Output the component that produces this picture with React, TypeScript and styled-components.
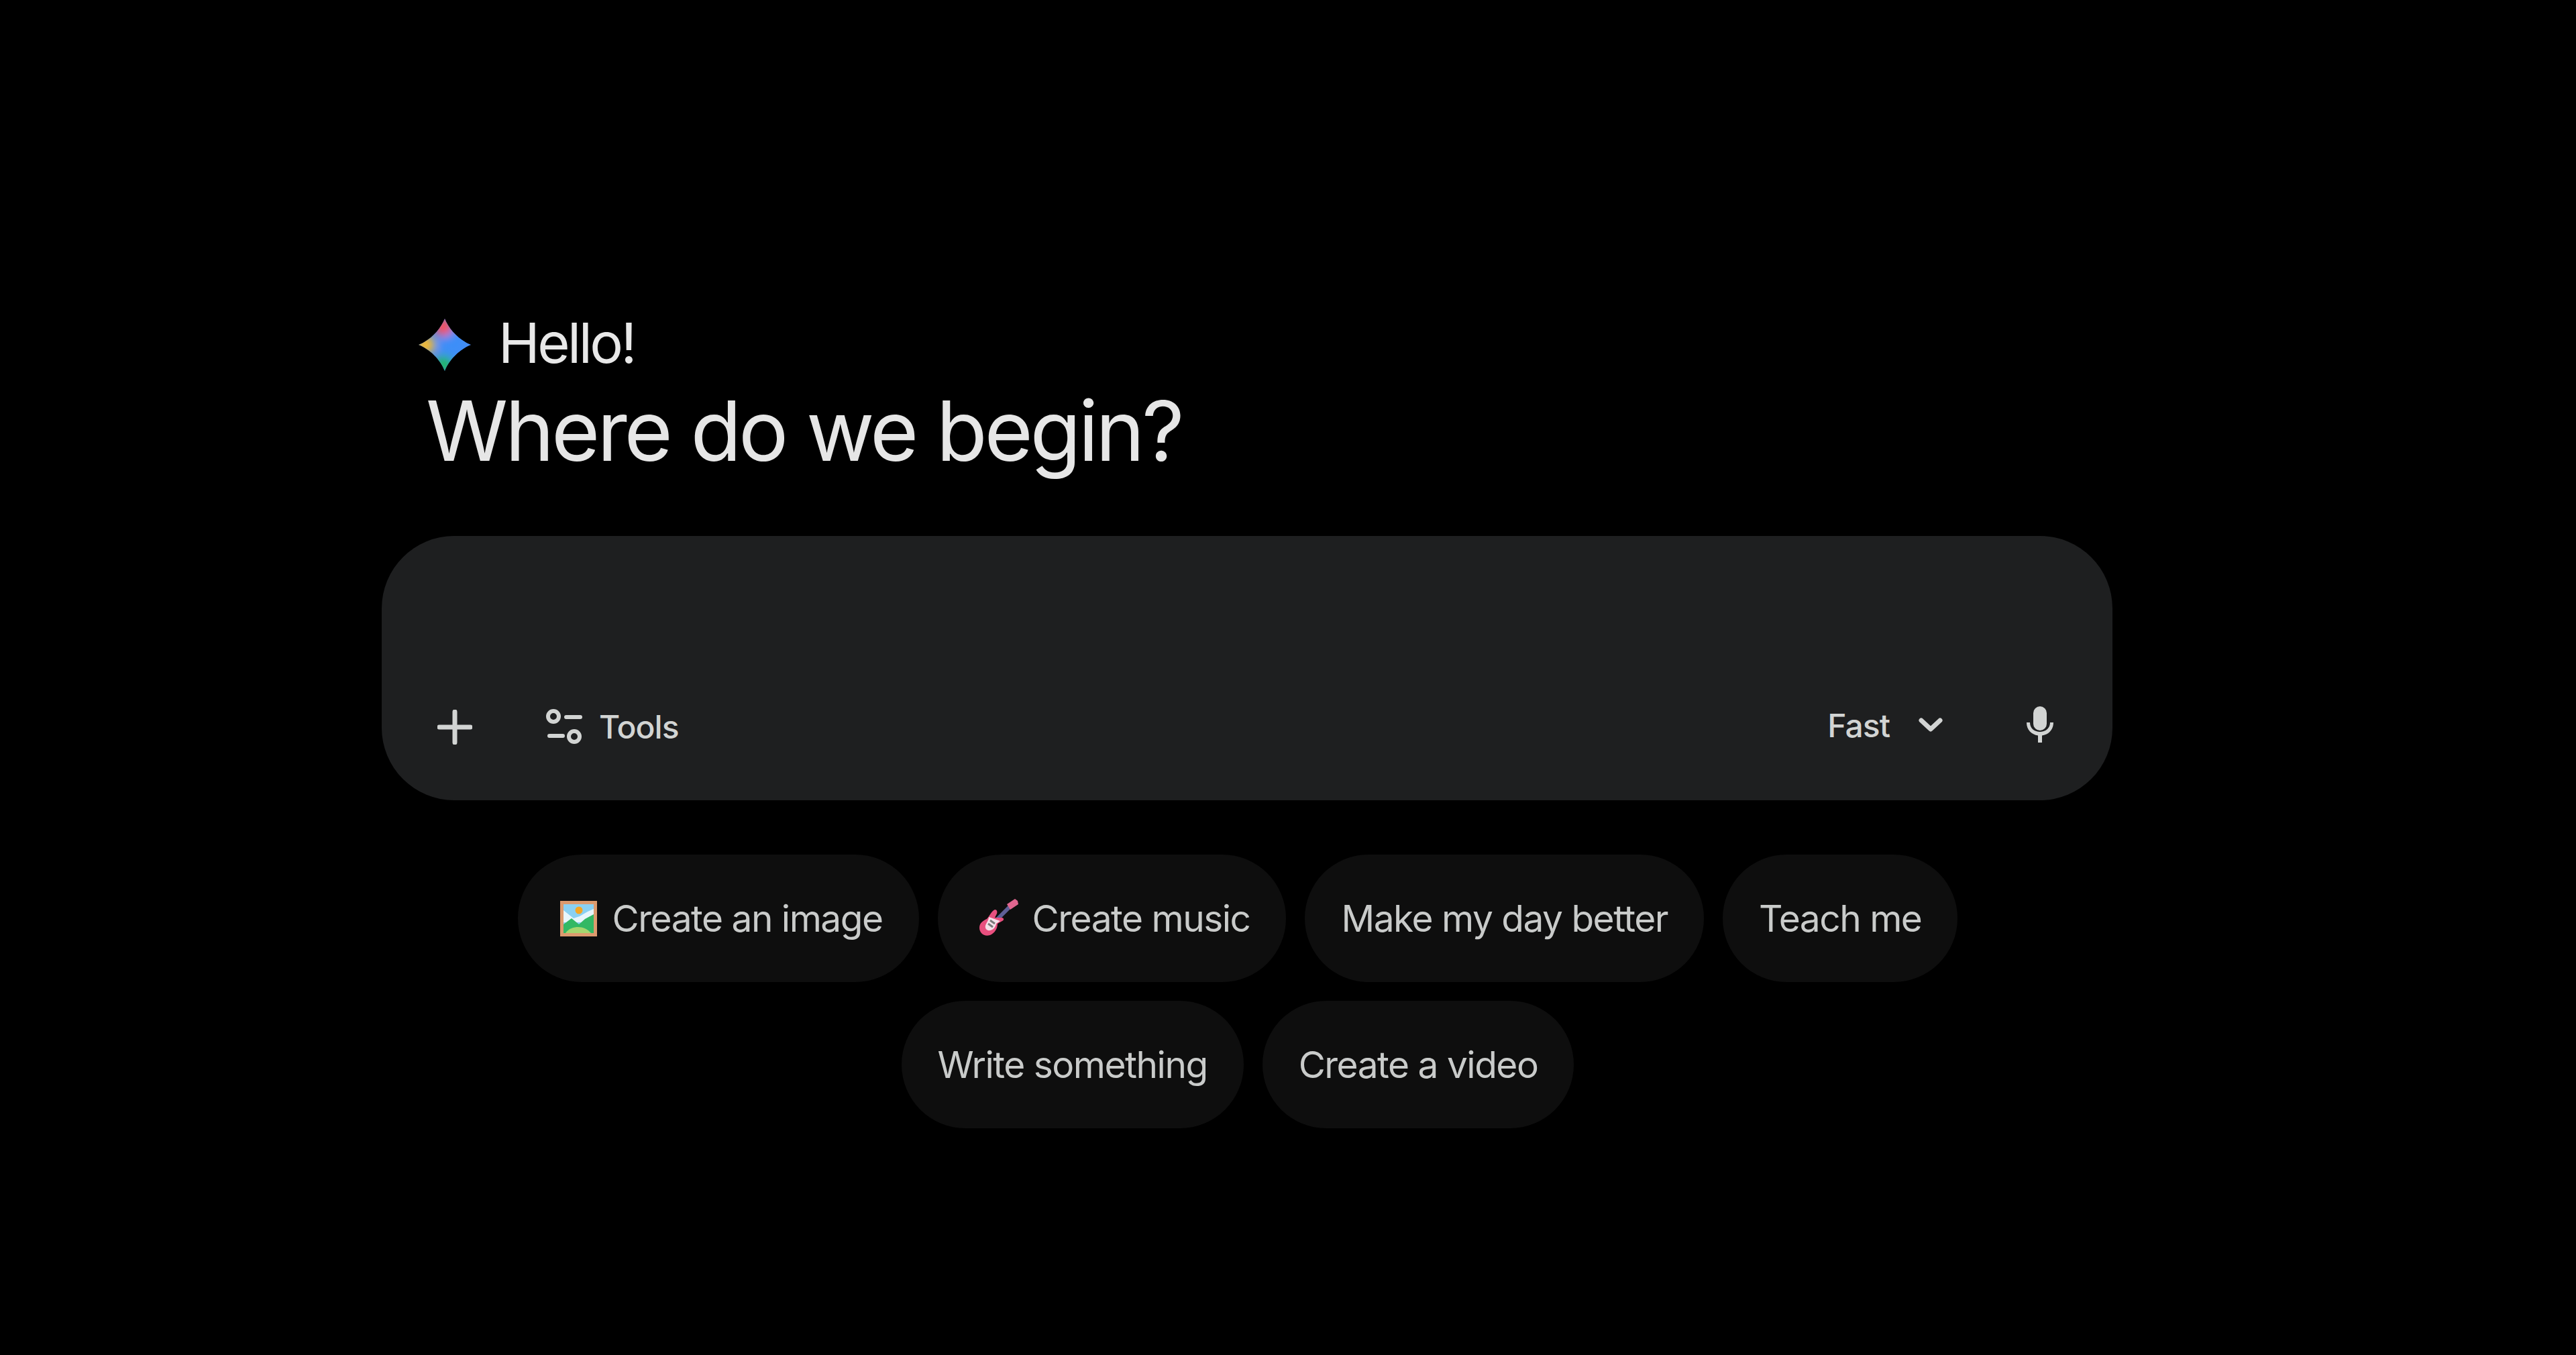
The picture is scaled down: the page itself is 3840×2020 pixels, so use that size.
import React from "react";
import styled, { createGlobalStyle } from "styled-components";

const Global = createGlobalStyle`
  html, body { margin: 0; padding: 0; background: #000; }
  * { box-sizing: border-box; }
`;

const Page = styled.main`
  min-height: 2020px;
  width: 3840px;
  background: #000;
  padding: 459px 0 0 569px;
  font-family: Inter, "Liberation Sans", sans-serif;
`;

const Column = styled.div`
  width: 2580px;
  display: flex;
  flex-direction: column;
`;

const Greeting = styled.div`
  display: flex;
  align-items: center;
  gap: 41px;
  padding-left: 55px;
  height: 105px;
`;

const StarMark = styled.svg`
  width: 78px;
  height: 78px;
  margin-top: 5px;
`;

const Hello = styled.span`
  font-size: 83px;
  line-height: 105px;
  letter-spacing: -3.5px;
  color: #e8e8e8;
`;

const Heading = styled.h1`
  margin: 0 0 78px 0;
  padding-left: 66px;
  font-size: 124px;
  line-height: 157px;
  font-weight: 400;
  letter-spacing: -4.2px;
  color: #e6e6e6;
`;

const Composer = styled.section`
  height: 394px;
  border-radius: 108px;
  background: #1e1f20;
  display: flex;
  align-items: flex-end;
  justify-content: space-between;
  padding: 0 86px 81px 83px;
`;

const ToolGroup = styled.div<{ $raised?: boolean }>`
  display: flex;
  align-items: center;
  margin-bottom: ${(p) => (p.$raised ? "1px" : "0")};
`;

const Label = styled.span`
  font-size: 48px;
  line-height: 56px;
  letter-spacing: -1px;
  font-weight: 500;
  color: #d2d4d3;
`;

const Plus = styled.svg`
  width: 52px;
  height: 52px;
  margin-right: 109px;
`;

const ToolsIcon = styled.svg`
  width: 58px;
  height: 56px;
  margin-right: 22px;
`;

const Chevron = styled.svg`
  width: 38px;
  height: 24px;
  margin: 0 0 2px 42px;
`;

const Mic = styled.svg`
  width: 44px;
  height: 56px;
  margin: 0 0 2px 122px;
`;

const Chips = styled.div`
  display: flex;
  flex-wrap: wrap;
  justify-content: center;
  margin-top: 81px;
`;

const Chip = styled.button<{ $emoji?: boolean }>`
  height: 190px;
  margin: 0 28px 28px 0;
  padding: 0 54px 0 ${(p) => (p.$emoji ? "61px" : "54px")};
  border: 0;
  border-radius: 95px;
  background: #0e0e0e;
  color: #c9cbca;
  font-family: inherit;
  font-size: 55px;
  letter-spacing: -1.5px;
  display: flex;
  align-items: center;
  gap: 21px;
`;

const Emoji = styled.svg`
  width: 59px;
  height: 59px;
`;

const Break = styled.div`
  flex-basis: 100%;
  height: 0;
`;

const Star = () => (
  <StarMark viewBox="0 0 76 76">
    <defs>
      <clipPath id="star">
        <path d="M38 0C44 16 60 32 76 38C60 44 44 60 38 76C32 60 16 44 0 38C16 32 32 16 38 0Z" />
      </clipPath>
      <filter id="soft" x="-50%" y="-50%" width="200%" height="200%">
        <feGaussianBlur stdDeviation="6" />
      </filter>
    </defs>
    <g clipPath="url(#star)">
      <rect width="76" height="76" fill="#4a8df0" />
      <g filter="url(#soft)">
        <circle cx="52" cy="38" r="20" fill="#3d8ef8" />
        <circle cx="36" cy="12" r="13" fill="#f8505c" />
        <circle cx="10" cy="38" r="13" fill="#fbbc2c" />
        <circle cx="37" cy="66" r="12" fill="#1fb85e" />
      </g>
    </g>
  </StarMark>
);

const ImageEmoji = () => (
  <Emoji viewBox="0 0 59 59">
    <rect x="2" y="3" width="55" height="53" fill="#dc9a6e" />
    <rect x="7" y="8" width="45" height="43" fill="#8ad0f2" />
    <path d="M7 17l15 12 9-3 12-7 9-4v20H7z" fill="#e8f5fb" />
    <circle cx="30" cy="17" r="5.500" fill="#f5a623" />
    <path d="M7 38l12-9 11 9 9-8 13-7v28H7z" fill="#33b864" />
    <path d="M10 51c5-7 12-9 19-9s14 3 19 9z" fill="#a5d66f" />
  </Emoji>
);

const GuitarEmoji = () => (
  <Emoji viewBox="0 0 59 59">
    <path d="M24 34L50 8" stroke="#5f5f96" strokeWidth="6" />
    <path d="M42 8l12-8 4 3 1 5-12 8z" fill="#e0668f" />
    <path d="M24 16c3 0 4 3 3 6l-3 6 10 0c4 0 4 4 1 5l-7 4c0 7-4 14-11 17-9 3-16-3-16-11 0-7 6-11 11-13 4-4 7-12 12-14z" fill="#e84f7e" />
    <path d="M15 27l17 6-6 4c-1 5-4 9-9 10-5 1-8-3-7-7 1-4 5-8 5-13z" fill="#f6e0e9" />
    <path d="M17 32l7 5M14 37l7 5" stroke="#7a7a7a" strokeWidth="3" />
  </Emoji>
);

export default function App() {
  return (
    <Page>
      <Global />
      <Column>
        <Greeting>
          <Star />
          <Hello>Hello!</Hello>
        </Greeting>
        <Heading>Where do we begin?</Heading>
        <Composer>
          <ToolGroup>
            <Plus viewBox="0 0 52 52" fill="none" stroke="#d2d4d3" strokeWidth="7" strokeLinecap="round">
              <path d="M26 3V49M3 26H49" />
            </Plus>
            <ToolsIcon viewBox="0 0 58 56" fill="none" stroke="#d2d4d3" strokeWidth="6" strokeLinecap="round">
              <circle cx="12" cy="12" r="8" />
              <circle cx="43" cy="42" r="8" />
              <path d="M31 13H52M6 41H26" />
            </ToolsIcon>
            <Label>Tools</Label>
          </ToolGroup>
          <ToolGroup $raised>
            <Label>Fast</Label>
            <Chevron viewBox="0 0 38 24" fill="none" stroke="#d2d4d3" strokeWidth="7" strokeLinecap="round" strokeLinejoin="round">
              <path d="M5 5L19 18L33 5" />
            </Chevron>
            <Mic viewBox="0 0 44 56" fill="#d2d4d3">
              <rect x="12" y="0" width="20" height="36" rx="10" />
              <path d="M2 24h5c0 9 7 14 15 14s15-5 15-14h5c0 11-7 18-17 19.500V54h-6V43.500C9 42 2 35 2 24z" />
            </Mic>
          </ToolGroup>
        </Composer>
        <Chips>
          <Chip $emoji>
            <ImageEmoji />
            Create an image
          </Chip>
          <Chip $emoji>
            <GuitarEmoji />
            Create music
          </Chip>
          <Chip>Make my day better</Chip>
          <Chip>Teach me</Chip>
          <Break />
          <Chip>Write something</Chip>
          <Chip>Create a video</Chip>
        </Chips>
      </Column>
    </Page>
  );
}
